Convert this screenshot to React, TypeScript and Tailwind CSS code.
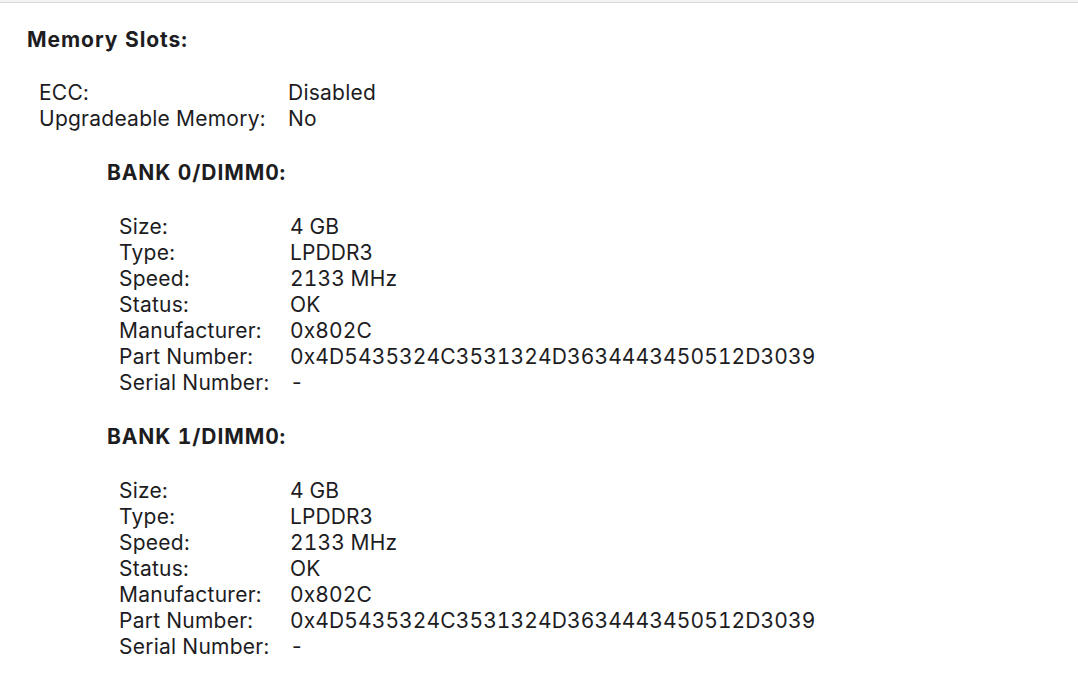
const rootInfo = [
  { label: "ECC:", value: "Disabled" },
  { label: "Upgradeable Memory:", value: "No" },
];

const banks = [
  {
    name: "BANK 0/DIMM0:",
    rows: [
      { label: "Size:", value: "4 GB" },
      { label: "Type:", value: "LPDDR3" },
      { label: "Speed:", value: "2133 MHz" },
      { label: "Status:", value: "OK" },
      { label: "Manufacturer:", value: "0x802C" },
      { label: "Part Number:", value: "0x4D5435324C3531324D3634443450512D3039" },
      { label: "Serial Number:", value: "-" },
    ],
  },
  {
    name: "BANK 1/DIMM0:",
    rows: [
      { label: "Size:", value: "4 GB" },
      { label: "Type:", value: "LPDDR3" },
      { label: "Speed:", value: "2133 MHz" },
      { label: "Status:", value: "OK" },
      { label: "Manufacturer:", value: "0x802C" },
      { label: "Part Number:", value: "0x4D5435324C3531324D3634443450512D3039" },
      { label: "Serial Number:", value: "-" },
    ],
  },
];

export default function App() {
  return (
    <div
      className="w-[1078px] h-[700px] bg-white text-[#1d1d1f] text-[21px] leading-[26px] tracking-[0.25px] tabular-nums overflow-hidden"
      style={{ fontFamily: "Inter, 'Liberation Sans', sans-serif" }}
    >
      <div className="h-[3px] bg-[#f3f3f3] border-b border-[#d9d9d9]" />
      <div className="pl-[27px] pt-[24px]">
        <h2 className="font-bold tracking-[0.95px]">Memory Slots:</h2>

        <div className="pl-[12px] mt-[27px]">
          {rootInfo.map((r) => (
            <div key={r.label} className="flex">
              <span className="w-[249px] shrink-0">{r.label}</span>
              <span>{r.value}</span>
            </div>
          ))}

          {banks.map((bank) => (
            <div key={bank.name} className="pl-[68px] mt-[28px]">
              <h3 className="font-bold tracking-[0.9px]">{bank.name}</h3>
              <div className="pl-[12px] mt-[28px]">
                {bank.rows.map((r) => (
                  <div key={r.label} className="flex">
                    <span className="w-[171px] shrink-0">{r.label}</span>
                    <span className="tracking-[0.1px]">{r.value}</span>
                  </div>
                ))}
              </div>
            </div>
          ))}
        </div>
      </div>
    </div>
  );
}
